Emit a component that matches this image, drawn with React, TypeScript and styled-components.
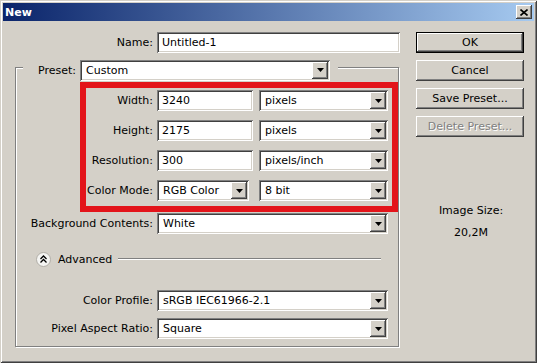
import React, { FC } from 'react';
import styled, { createGlobalStyle, css } from 'styled-components';

const FACE = '#d4d0c8';
const SHADOW = '#808080';
const DARK = '#404040';
const RED = '#e3141a';

const GlobalStyle = createGlobalStyle`
  html, body {
    margin: 0;
    padding: 0;
    background: ${FACE};
  }

  body {
    font-family: 'DejaVu Sans', Tahoma, Verdana, sans-serif;
    font-size: 11px;
    color: #000;
  }
`;

const raised = css`
  background: ${FACE};
  box-shadow: inset -1px -1px 0 ${DARK}, inset 1px 1px 0 #fff, inset -2px -2px 0 ${SHADOW},
    inset 2px 2px 0 ${FACE};
`;

const sunken = css`
  background: #fff;
  box-shadow: inset 1px 1px 0 ${SHADOW}, inset -1px -1px 0 #fff, inset 2px 2px 0 ${DARK},
    inset -2px -2px 0 ${FACE};
`;

const Window = styled.div`
  width: 537px;
  height: 363px;
  box-sizing: border-box;
  padding: 3px;
  display: flex;
  flex-direction: column;
  background: ${FACE};
  box-shadow: inset 1px 1px 0 ${FACE}, inset -1px -1px 0 ${DARK}, inset 2px 2px 0 #fff,
    inset -2px -2px 0 ${SHADOW};
`;

const TitleBar = styled.div`
  height: 18px;
  flex: none;
  display: flex;
  align-items: center;
  justify-content: space-between;
  padding: 0 2px 0 2px;
  background: linear-gradient(to right, #0a246a, #a6caf0);
  color: #fff;
  font-weight: 700;
  font-size: 11px;
`;

const CloseButton = styled.div`
  ${raised};
  width: 16px;
  height: 14px;
  display: flex;
  align-items: center;
  justify-content: center;
`;

const Body = styled.div`
  flex: 1;
  display: flex;
`;

const LeftPanel = styled.div`
  width: 397px;
  flex: none;
  display: flex;
  flex-direction: column;
  align-items: flex-start;
`;

const Row = styled.div<{ $top?: number }>`
  display: flex;
  align-items: center;
  height: 21px;
  margin-top: ${(p) => p.$top ?? 0}px;
`;

const Label = styled.label<{ $w: number }>`
  width: ${(p) => p.$w}px;
  flex: none;
  margin-right: 4px;
  text-align: right;
  white-space: nowrap;
`;

const TextBox = styled.div<{ $w: number }>`
  ${sunken};
  width: ${(p) => p.$w}px;
  height: 21px;
  box-sizing: border-box;
  padding: 0 5px;
  display: flex;
  align-items: center;
  white-space: nowrap;
`;

const SelectBox = styled.div<{ $w: number; $gap?: number }>`
  ${sunken};
  width: ${(p) => p.$w}px;
  height: 21px;
  box-sizing: border-box;
  padding: 2px 2px 2px 6px;
  margin-left: ${(p) => p.$gap ?? 0}px;
  display: flex;
  align-items: center;
  white-space: nowrap;

  > span {
    flex: 1;
  }
`;

const DropButton = styled.div`
  ${raised};
  width: 16px;
  height: 17px;
  flex: none;
  display: flex;
  align-items: center;
  justify-content: center;
`;

const GroupBox = styled.div`
  margin: 14px 0 0 12px;
  width: 384px;
  box-sizing: border-box;
  border: 1px solid ${SHADOW};
  box-shadow: inset 1px 1px 0 #fff, 1px 1px 0 #fff;
  padding-bottom: 7px;
  display: flex;
  flex-direction: column;
  align-items: flex-start;
`;

const GroupHeader = styled.div`
  margin: -9px 0 0 7px;
  padding-right: 8px;
  height: 22px;
  display: flex;
  align-items: center;
  background: ${FACE};
`;

const Highlight = styled.div`
  margin: 1px 0 0 64px;
  width: 318px;
  box-sizing: border-box;
  border: 6px solid ${RED};
  padding: 2px 0 5px;
  display: flex;
  flex-direction: column;
  gap: 9px;
`;

const AdvancedRow = styled.div`
  margin-top: 17px;
  height: 16px;
  width: 100%;
  box-sizing: border-box;
  padding: 0 17px 0 20px;
  display: flex;
  align-items: center;
  gap: 7px;
`;

const Rule = styled.div`
  flex: 1;
  margin-left: -1px;
  border-top: 1px solid ${SHADOW};
  border-bottom: 1px solid #fff;
`;

const RightColumn = styled.div`
  width: 108px;
  margin-left: 16px;
  padding-top: 11px;
  display: flex;
  flex-direction: column;
  gap: 7px;
`;

const Button = styled.div<{ $isDefault?: boolean; $disabled?: boolean }>`
  ${raised};
  height: 21px;
  box-sizing: border-box;
  display: flex;
  align-items: center;
  justify-content: center;
  ${(p) =>
    p.$isDefault &&
    css`
      border: 1px solid #000;
    `}
  ${(p) =>
    p.$disabled &&
    css`
      color: ${SHADOW};
      text-shadow: 1px 1px 0 #fff;
    `}
`;

const InfoBlock = styled.div`
  margin-top: 60px;
  text-align: center;
  line-height: 14px;
  padding-left: 2px;

  p {
    margin: 0;
  }

  p + p {
    margin-top: 8px;
  }
`;

const Arrow: FC = () => (
  <svg width="7" height="4" viewBox="0 0 7 4">
    <path d="M0 0h7L3.5 4z" fill="#000" />
  </svg>
);

const Select: FC<{ w: number; value: string; gap?: number }> = ({ w, value, gap }) => (
  <SelectBox $w={w} $gap={gap}>
    <span>{value}</span>
    <DropButton>
      <Arrow />
    </DropButton>
  </SelectBox>
);

const sizeRows = [
  { label: 'Width:', value: '3240', unit: 'pixels' },
  { label: 'Height:', value: '2175', unit: 'pixels' },
  { label: 'Resolution:', value: '300', unit: 'pixels/inch' }
];

export default function App() {
  return (
    <>
      <GlobalStyle />
      <Window>
        <TitleBar>
          <span>New</span>
          <CloseButton>
            <svg width="8" height="7" viewBox="0 0 8 7">
              <path d="M0.5 0.5l7 6M7.5 0.5l-7 6" stroke="#000" strokeWidth="1.6" />
            </svg>
          </CloseButton>
        </TitleBar>
        <Body>
          <LeftPanel>
            <Row $top={11}>
              <Label $w={150}>Name:</Label>
              <TextBox $w={243}>Untitled-1</TextBox>
            </Row>
            <GroupBox>
              <GroupHeader>
                <Label $w={53}>Preset:</Label>
                <Select w={250} value="Custom" />
              </GroupHeader>
              <Highlight>
                {sizeRows.map((r) => (
                  <Row key={r.label}>
                    <Label $w={67}>{r.label}</Label>
                    <TextBox $w={96}>{r.value}</TextBox>
                    <Select w={129} gap={6} value={r.unit} />
                  </Row>
                ))}
                <Row>
                  <Label $w={67}>Color Mode:</Label>
                  <Select w={92} value="RGB Color" />
                  <Select w={129} gap={10} value="8 bit" />
                </Row>
              </Highlight>
              <Row $top={1}>
                <Label $w={137}>Background Contents:</Label>
                <Select w={231} value="White" />
              </Row>
              <AdvancedRow>
                <svg width="15" height="15" viewBox="0 0 15 15">
                  <circle cx="7.5" cy="7.5" r="7" fill="#f4f4f2" stroke="#b0ada6" />
                  <path d="M4.5 7l3-3 3 3M4.5 10.5l3-3 3 3" fill="none" stroke="#000" strokeWidth="1.3" />
                </svg>
                <span>Advanced</span>
                <Rule />
              </AdvancedRow>
              <Row $top={23}>
                <Label $w={137}>Color Profile:</Label>
                <Select w={231} value="sRGB IEC61966-2.1" />
              </Row>
              <Row $top={7}>
                <Label $w={137}>Pixel Aspect Ratio:</Label>
                <Select w={231} value="Square" />
              </Row>
            </GroupBox>
          </LeftPanel>
          <RightColumn>
            <Button $isDefault>OK</Button>
            <Button>Cancel</Button>
            <Button>Save Preset...</Button>
            <Button $disabled>Delete Preset...</Button>
            <InfoBlock>
              <p>Image Size:</p>
              <p>20,2M</p>
            </InfoBlock>
          </RightColumn>
        </Body>
      </Window>
    </>
  );
}
